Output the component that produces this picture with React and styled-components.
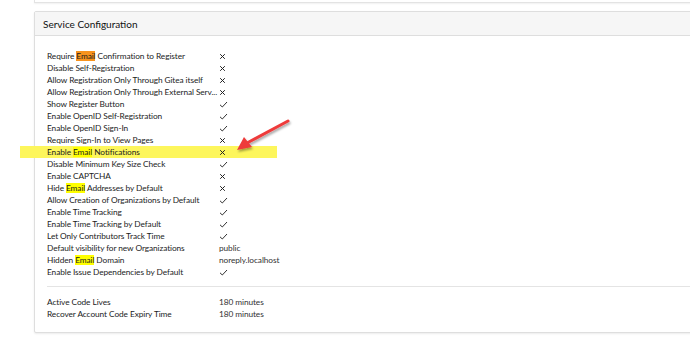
import React from 'react'
import styled, { createGlobalStyle } from 'styled-components'

const GlobalStyle = createGlobalStyle`
  html, body {
    margin: 0;
    padding: 0;
    background: #fff;
    overflow: hidden;
  }
  body {
    font-family: Lato, "Noto Sans", "Liberation Sans", sans-serif;
    color: #1b1c1d;
  }
`

const Page = styled.div`
  position: relative;
  width: 690px;
  height: 337px;
  padding-left: 34px;
  box-sizing: border-box;
  overflow: hidden;
`

const PrevSegment = styled.div`
  height: 2px;
  width: 700px;
  border: 1px solid #e3e3e3;
  border-top: none;
  box-shadow: 0 1px 2px rgba(0, 0, 0, 0.06);
`

const Segment = styled.section`
  margin-top: 8px;
  width: 700px;
  border: 1px solid #dedede;
  border-radius: 2px;
  box-shadow: 0 1px 2px rgba(0, 0, 0, 0.08);
  background: #fff;
`

const Header = styled.h4`
  margin: 0;
  height: 23px;
  display: flex;
  align-items: center;
  padding-left: 8px;
  background: #f6f6f6;
  border-bottom: 1px solid #dedede;
  font-size: 10px;
  font-weight: 400;
  color: #111;
`

const Body = styled.div`
  padding: 14px 0 12px 12px;
`

const Row = styled.div`
  display: flex;
  align-items: center;
  height: 12px;
  font-size: 8.3px;
  letter-spacing: -0.08px;
  ${(p) =>
    p.$marked &&
    `
    margin-left: -27px;
    padding-left: 27px;
    width: 230px;
    background: #fdf65c;
  `}
`

const Label = styled.span`
  width: 172px;
  flex: none;
  white-space: nowrap;
`

const Value = styled.span`
  color: #333;
  display: flex;
  align-items: center;
`

const Mark = styled.mark`
  background: ${(p) => (p.$orange ? '#f7931e' : '#ffff00')};
  color: inherit;
  padding: 0;
`

const Divider = styled.hr`
  border: none;
  border-top: 1px solid #e4e4e4;
  margin: 8px 0 9px 0;
`

const Arrow = styled.svg`
  position: absolute;
  left: 225px;
  top: 114px;
  pointer-events: none;
`

const Check = () => (
  <svg width="9" height="7" viewBox="0 0 9 7">
    <path d="M1 3.8 L3.3 6 L8 1" fill="none" stroke="#333" strokeWidth="1" />
  </svg>
)

const Cross = () => (
  <svg width="7" height="7" viewBox="0 0 7 7">
    <path d="M1.2 1.2 L5.8 5.8 M5.8 1.2 L1.2 5.8" fill="none" stroke="#222" strokeWidth="1" />
  </svg>
)

const em = (orange) => <Mark $orange={orange}>Email</Mark>

const rows = [
  { label: <>Require {em(true)} Confirmation to Register</>, v: false },
  { label: 'Disable Self-Registration', v: false },
  { label: 'Allow Registration Only Through Gitea itself', v: false },
  { label: 'Allow Registration Only Through External Serv...', v: false },
  { label: 'Show Register Button', v: true },
  { label: 'Enable OpenID Self-Registration', v: true },
  { label: 'Enable OpenID Sign-In', v: true },
  { label: 'Require Sign-In to View Pages', v: false },
  { label: <>Enable {em()} Notifications</>, v: false, marked: true },
  { label: 'Disable Minimum Key Size Check', v: true },
  { label: 'Enable CAPTCHA', v: false },
  { label: <>Hide {em()} Addresses by Default</>, v: false },
  { label: 'Allow Creation of Organizations by Default', v: true },
  { label: 'Enable Time Tracking', v: true },
  { label: 'Enable Time Tracking by Default', v: true },
  { label: 'Let Only Contributors Track Time', v: true },
  { label: 'Default visibility for new Organizations', v: 'public' },
  { label: <>Hidden {em()} Domain</>, v: 'noreply.localhost' },
  { label: 'Enable Issue Dependencies by Default', v: true },
]

const timing = [
  { label: 'Active Code Lives', v: '180 minutes' },
  { label: 'Recover Account Code Expiry Time', v: '180 minutes' },
]

const renderValue = (v) => {
  if (v === true) return <Check />
  if (v === false) return <Cross />
  return v
}

export default function App() {
  return (
    <>
      <GlobalStyle />
      <Page>
        <PrevSegment />
        <Segment>
          <Header>Service Configuration</Header>
          <Body>
            {rows.map((r, i) => (
              <Row key={i} $marked={r.marked}>
                <Label>{r.label}</Label>
                <Value>{renderValue(r.v)}</Value>
              </Row>
            ))}
            <Divider />
            {timing.map((r, i) => (
              <Row key={i}>
                <Label>{r.label}</Label>
                <Value>{r.v}</Value>
              </Row>
            ))}
          </Body>
        </Segment>
        <Arrow width="80" height="50" viewBox="0 0 80 50">
          <defs>
            <filter id="sh" x="-20%" y="-20%" width="150%" height="160%">
              <feDropShadow dx="1" dy="2" stdDeviation="1.2" floodColor="#000" floodOpacity="0.35" />
            </filter>
          </defs>
          <g filter="url(#sh)">
            <path d="M63 7 L22 29" stroke="#ee3b3b" strokeWidth="3" strokeLinecap="round" />
            <path d="M12 36 L19 23 L27 33 Z" fill="#ee3b3b" />
          </g>
        </Arrow>
      </Page>
    </>
  )
}
